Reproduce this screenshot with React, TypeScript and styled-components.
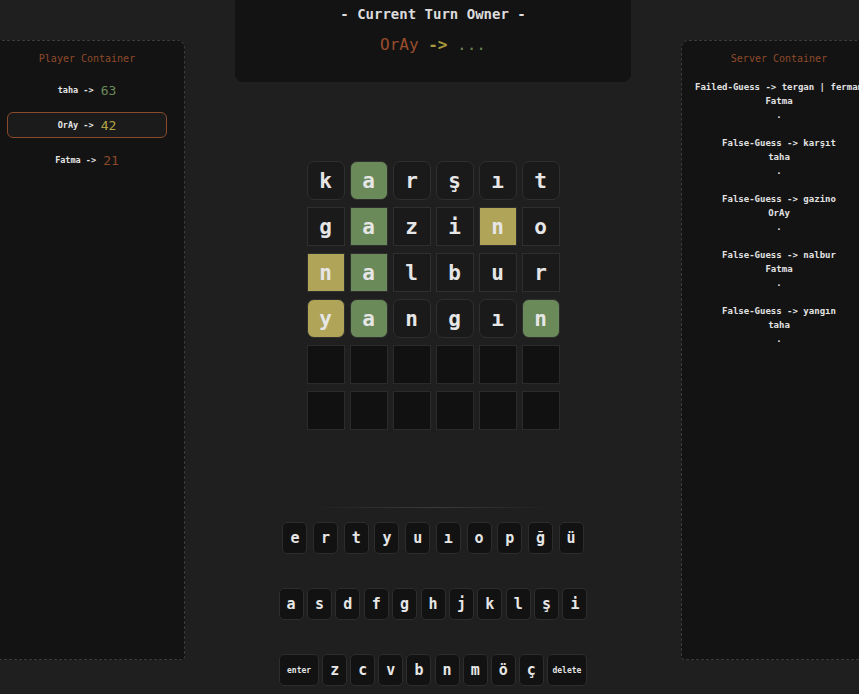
import React from "react";
import styled, { createGlobalStyle } from "styled-components";

const GlobalStyle = createGlobalStyle`
  html, body {
    margin: 0;
    padding: 0;
    background: #1f1f1f;
    overflow: hidden;
  }
  body {
    font-family: "DejaVu Sans Mono", "Liberation Mono", monospace;
  }
`;

const Layout = styled.div`
  display: flex;
  align-items: flex-start;
  width: 888px;
  height: 694px;
  margin-left: -11px;
`;

const SidePanel = styled.aside`
  flex: none;
  width: 196px;
  height: 620px;
  margin-top: 40px;
  box-sizing: border-box;
  background: #131313;
  border: 1px dashed #3a3a3a;
  border-radius: 8px 8px 4px 4px;
  padding-top: 11px;
  text-align: center;
  white-space: nowrap;
`;

const PanelTitle = styled.div`
  font-size: 10px;
  line-height: 14px;
  color: #8f4a2b;
`;

const PlayerList = styled.div`
  display: flex;
  flex-direction: column;
  gap: 9px;
  margin-top: 11px;
  padding: 0 17px;
`;

const PlayerRow = styled.div<{ $active?: boolean }>`
  height: 26px;
  box-sizing: border-box;
  display: flex;
  align-items: center;
  justify-content: center;
  border: 1px solid ${(p) => (p.$active ? "#8a4a2c" : "transparent")};
  border-radius: 6px;
  background: ${(p) => (p.$active ? "#1b1b1b" : "transparent")};
`;

const PlayerName = styled.span`
  font-size: 8.5px;
  font-weight: bold;
  color: #e4e4e4;
  white-space: pre;
`;

const Score = styled.span<{ $color: string }>`
  font-size: 13px;
  color: ${(p) => p.$color};
  margin-left: 2px;
`;

const LogList = styled.div`
  display: flex;
  flex-direction: column;
  gap: 14px;
  margin-top: 14px;
`;

const LogEntry = styled.div`
  font-size: 9px;
  line-height: 14px;
  font-weight: bold;
  color: #e2e2e2;
`;

const MainColumn = styled.main`
  flex: 1;
  display: flex;
  flex-direction: column;
  align-items: center;
`;

const TurnBox = styled.section`
  width: 396px;
  height: 82px;
  box-sizing: border-box;
  background: #131313;
  border-radius: 0 0 8px 8px;
  padding-top: 5px;
  display: flex;
  flex-direction: column;
  align-items: center;
`;

const TurnTitle = styled.div`
  font-size: 14px;
  line-height: 18px;
  font-weight: bold;
  color: #dcdcdc;
  white-space: pre;
`;

const TurnOwner = styled.div`
  margin-top: 12px;
  font-size: 16px;
  line-height: 20px;
  white-space: pre;
`;

const Colored = styled.span<{ $color: string; $bold?: boolean }>`
  color: ${(p) => p.$color};
  font-weight: ${(p) => (p.$bold ? "bold" : "normal")};
`;

const Board = styled.div`
  margin-top: 79px;
  display: grid;
  grid-template-columns: repeat(6, 38px);
  grid-auto-rows: 39px;
  column-gap: 5px;
  row-gap: 7px;
`;

type TileState = "empty" | "plain" | "green" | "yellow";

const tileBg: Record<TileState, string> = {
  empty: "#111111",
  plain: "#1a1a1a",
  green: "#6b8a5a",
  yellow: "#b0a459",
};

const Tile = styled.div<{ $state: TileState; $rounded?: boolean }>`
  box-sizing: border-box;
  display: flex;
  align-items: center;
  justify-content: center;
  background: ${(p) => tileBg[p.$state]};
  border: 1px solid ${(p) => (p.$state === "empty" ? "#2b2b2b" : "#2f2f2f")};
  border-radius: ${(p) => (p.$rounded ? "7px" : "0")};
  color: #e6e6e6;
  font-size: 21px;
  font-weight: bold;
`;

const Divider = styled.div`
  margin-top: 77px;
  width: 240px;
  height: 1px;
  background: linear-gradient(90deg, rgba(60, 60, 60, 0), #3b3b3b 50%, rgba(60, 60, 60, 0));
`;

const Keyboard = styled.div`
  margin-top: 14px;
  display: flex;
  flex-direction: column;
  gap: 34px;
`;

const KeyRow = styled.div<{ $gap: number }>`
  display: flex;
  justify-content: center;
  gap: ${(p) => p.$gap}px;
`;

const Key = styled.div<{ $wide?: boolean }>`
  box-sizing: border-box;
  width: ${(p) => (p.$wide ? "40px" : "25px")};
  height: 32px;
  display: flex;
  align-items: center;
  justify-content: center;
  background: #121212;
  border: 1px solid #2d2d2d;
  border-radius: 5px;
  color: #e6e6e6;
  font-weight: bold;
  font-size: ${(p) => (p.$wide ? "8px" : "15px")};
`;

const players = [
  { name: "taha", score: 63, color: "#6b8a5a" },
  { name: "OrAy", score: 42, color: "#b3a445", active: true },
  { name: "Fatma", score: 21, color: "#8f4a2b" },
];

const logs = [
  { text: "Failed-Guess -> tergan | ferman", who: "Fatma" },
  { text: "False-Guess -> karşıt", who: "taha" },
  { text: "False-Guess -> gazino", who: "OrAy" },
  { text: "False-Guess -> nalbur", who: "Fatma" },
  { text: "False-Guess -> yangın", who: "taha" },
];

type Cell = [string, TileState];
const rows: { cells: Cell[]; rounded?: boolean }[] = [
  {
    rounded: true,
    cells: [
      ["k", "plain"],
      ["a", "green"],
      ["r", "plain"],
      ["ş", "plain"],
      ["ı", "plain"],
      ["t", "plain"],
    ],
  },
  {
    cells: [
      ["g", "plain"],
      ["a", "green"],
      ["z", "plain"],
      ["i", "plain"],
      ["n", "yellow"],
      ["o", "plain"],
    ],
  },
  {
    cells: [
      ["n", "yellow"],
      ["a", "green"],
      ["l", "plain"],
      ["b", "plain"],
      ["u", "plain"],
      ["r", "plain"],
    ],
  },
  {
    rounded: true,
    cells: [
      ["y", "yellow"],
      ["a", "green"],
      ["n", "plain"],
      ["g", "plain"],
      ["ı", "plain"],
      ["n", "green"],
    ],
  },
  { cells: Array.from({ length: 6 }, () => ["", "empty"] as Cell) },
  { cells: Array.from({ length: 6 }, () => ["", "empty"] as Cell) },
];

const keyRows: { keys: string[]; gap: number }[] = [
  { keys: ["e", "r", "t", "y", "u", "ı", "o", "p", "ğ", "ü"], gap: 5.7 },
  { keys: ["a", "s", "d", "f", "g", "h", "j", "k", "l", "ş", "i"], gap: 3.4 },
  { keys: ["enter", "z", "c", "v", "b", "n", "m", "ö", "ç", "delete"], gap: 3.1 },
];

export default function App() {
  return (
    <>
      <GlobalStyle />
      <Layout>
        <SidePanel>
          <PanelTitle>Player Container</PanelTitle>
          <PlayerList>
            {players.map((p) => (
              <PlayerRow key={p.name} $active={p.active}>
                <PlayerName>{p.name} -&gt; </PlayerName>
                <Score $color={p.color}>{p.score}</Score>
              </PlayerRow>
            ))}
          </PlayerList>
        </SidePanel>

        <MainColumn>
          <TurnBox>
            <TurnTitle>- Current Turn Owner -</TurnTitle>
            <TurnOwner>
              <Colored $color="#9a4d2c">OrAy</Colored>
              <Colored $color="#a8993c" $bold>
                {" -> "}
              </Colored>
              <Colored $color="#66824f">...</Colored>
            </TurnOwner>
          </TurnBox>

          <Board>
            {rows.map((row, ri) =>
              row.cells.map(([ch, st], ci) => (
                <Tile key={`${ri}-${ci}`} $state={st} $rounded={row.rounded}>
                  {ch}
                </Tile>
              ))
            )}
          </Board>

          <Divider />

          <Keyboard>
            {keyRows.map((r, i) => (
              <KeyRow key={i} $gap={r.gap}>
                {r.keys.map((k) => (
                  <Key key={k} $wide={k.length > 1}>
                    {k}
                  </Key>
                ))}
              </KeyRow>
            ))}
          </Keyboard>
        </MainColumn>

        <SidePanel>
          <PanelTitle>Server Container</PanelTitle>
          <LogList>
            {logs.map((l, i) => (
              <LogEntry key={i}>
                <div>{l.text}</div>
                <div>{l.who}</div>
                <div>.</div>
              </LogEntry>
            ))}
          </LogList>
        </SidePanel>
      </Layout>
    </>
  );
}
